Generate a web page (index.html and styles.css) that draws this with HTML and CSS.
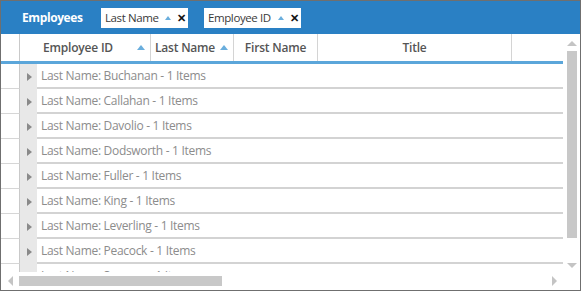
FILE: index.html
```html
<!DOCTYPE html>
<html lang="en">
<head>
    <meta charset="UTF-8">
    <title>Employees</title>
    <link rel="stylesheet" href="styles.css">
</head>
<body>
    <div class="grid">
        <!-- group panel -->
        <div class="group-panel">
            <span class="panel-title">Employees</span>
            <span class="chip chip-last">Last Name <i class="sort"></i><b class="remove">&#x2715;</b></span>
            <span class="chip chip-id">Employee ID <i class="sort"></i><b class="remove">&#x2715;</b></span>
        </div>

        <div class="body">
            <div class="main">
                <div class="head">
                    <div class="gutter"></div>
                    <div class="th sorted c-id">Employee ID<i class="sort"></i></div>
                    <div class="th sorted c-last">Last Name<i class="sort"></i></div>
                    <div class="th c-first">First Name</div>
                    <div class="th c-title">Title</div>
                    <div class="th c-rest"></div>
                </div>
                <div class="rows">
                    <div class="row"><div class="gutter"></div><div class="indent"><i class="expand"></i></div><div class="cap">Last Name: Buchanan - 1 Items</div></div>
                    <div class="row"><div class="gutter"></div><div class="indent"><i class="expand"></i></div><div class="cap">Last Name: Callahan - 1 Items</div></div>
                    <div class="row"><div class="gutter"></div><div class="indent"><i class="expand"></i></div><div class="cap">Last Name: Davolio - 1 Items</div></div>
                    <div class="row"><div class="gutter"></div><div class="indent"><i class="expand"></i></div><div class="cap">Last Name: Dodsworth - 1 Items</div></div>
                    <div class="row"><div class="gutter"></div><div class="indent"><i class="expand"></i></div><div class="cap">Last Name: Fuller - 1 Items</div></div>
                    <div class="row"><div class="gutter"></div><div class="indent"><i class="expand"></i></div><div class="cap">Last Name: King - 1 Items</div></div>
                    <div class="row"><div class="gutter"></div><div class="indent"><i class="expand"></i></div><div class="cap">Last Name: Leverling - 1 Items</div></div>
                    <div class="row"><div class="gutter"></div><div class="indent"><i class="expand"></i></div><div class="cap">Last Name: Peacock - 1 Items</div></div>
                    <div class="row"><div class="gutter"></div><div class="indent"><i class="expand"></i></div><div class="cap">Last Name: Suyama - 1 Items</div></div>
                </div>
            </div>
            <div class="vscroll">
                <i class="arr up"></i>
                <div class="vthumb"></div>
                <i class="arr down"></i>
            </div>
        </div>

        <div class="hscroll">
            <div class="htrack">
                <i class="arr left"></i>
                <div class="hthumb"></div>
                <i class="arr right"></i>
            </div>
            <div class="corner"></div>
        </div>
    </div>
</body>
</html>
```

FILE: styles.css
```css
*{
    margin: 0;
    padding: 0;
    box-sizing: border-box;
}
body{
    font-family: "Open Sans", "Noto Sans", sans-serif;
    background: #fff;
}
.grid{
    width: 581px;
    height: 291px;
    border: 1px solid #6f6f6f;
    display: flex;
    flex-direction: column;
    overflow: hidden;
}
.group-panel{
    height: 33px;
    flex: none;
    background: #2a80c4;
    display: flex;
    align-items: center;
    padding-left: 21px;
}
.panel-title{
    color: #fff;
    font-weight: bold;
    font-size: 12px;
    letter-spacing: -0.4px;
    width: 79px;
}
.chip{
    height: 20px;
    background: #fff;
    color: #3a3a3a;
    font-size: 11.5px;
    letter-spacing: -0.4px;
    display: flex;
    align-items: center;
    padding: 0 2px 0 4px;
    margin-right: 16px;
    white-space: nowrap;
}
.chip-last{ width: 87px; }
.chip-id{ width: 97px; }
.chip .sort{
    margin-left: auto;
    border-left-width: 3px;
    border-right-width: 3px;
    border-bottom-width: 4px;
}
.remove{
    font-size: 11px;
    color: #111;
    margin-left: 6px;
    font-weight: bold;
}
.sort{
    display: inline-block;
    width: 0;
    height: 0;
    border-left: 4px solid transparent;
    border-right: 4px solid transparent;
    border-bottom: 5px solid #6aaedd;
}
.body{
    flex: 1;
    display: flex;
    min-height: 0;
}
.main{
    width: 562px;
    overflow: hidden;
}
.head{
    height: 30px;
    display: flex;
    border-bottom: 3px solid #5ba6da;
}
.gutter{
    width: 19px;
    flex: none;
    border-right: 1px solid #c9c9c9;
}
.th{
    position: relative;
    border-right: 1px solid #d4d4d4;
    font-size: 12px;
    font-weight: 600;
    color: #555;
    letter-spacing: -0.2px;
    display: flex;
    align-items: center;
    justify-content: center;
    flex: none;
}
.th.sorted{
    padding-right: 14px;
}
.th .sort{
    position: absolute;
    right: 5px;
    top: 11px;
}
.c-id{ width: 131px; }
.c-last{ width: 83px; }
.c-first{ width: 84px; }
.c-title{ width: 194px; }
.c-rest{ flex: 1; border-right: 0; }
.row{
    height: 25px;
    display: flex;
}
.row .gutter{
    border-bottom: 1px solid #d6d6d6;
}
.indent{
    width: 17px;
    flex: none;
    background: #e8e8e8;
    display: flex;
    align-items: center;
    padding-left: 7px;
}
.expand{
    width: 0;
    height: 0;
    border-top: 4px solid transparent;
    border-bottom: 4px solid transparent;
    border-left: 5px solid #8a8a8a;
}
.cap{
    flex: 1;
    border-bottom: 2px solid #d3d3d3;
    font-size: 12px;
    color: #8c8c8c;
    letter-spacing: -0.3px;
    padding-left: 4px;
    display: flex;
    align-items: center;
    white-space: nowrap;
}
.vscroll{
    flex: 1;
    display: flex;
    flex-direction: column;
    align-items: center;
    padding: 7px 0 4px;
}
.vthumb{
    width: 10px;
    height: 187px;
    background: #c8c8c8;
    margin: 5px 0 auto;
}
.arr{
    width: 0;
    height: 0;
    display: block;
    flex: none;
}
.up{
    border-left: 5px solid transparent;
    border-right: 5px solid transparent;
    border-bottom: 5px solid #c4c4c4;
}
.down{
    border-left: 5px solid transparent;
    border-right: 5px solid transparent;
    border-top: 5px solid #c4c4c4;
}
.left{
    border-top: 5px solid transparent;
    border-bottom: 5px solid transparent;
    border-right: 5px solid #c4c4c4;
}
.right{
    border-top: 5px solid transparent;
    border-bottom: 5px solid transparent;
    border-left: 5px solid #c4c4c4;
}
.hscroll{
    height: 18px;
    flex: none;
    display: flex;
}
.htrack{
    width: 562px;
    display: flex;
    align-items: center;
    padding: 0 6px 0 7px;
}
.hthumb{
    width: 203px;
    height: 10px;
    background: #c8c8c8;
    margin: 0 auto 0 6px;
}
.corner{
    flex: 1;
}
```
